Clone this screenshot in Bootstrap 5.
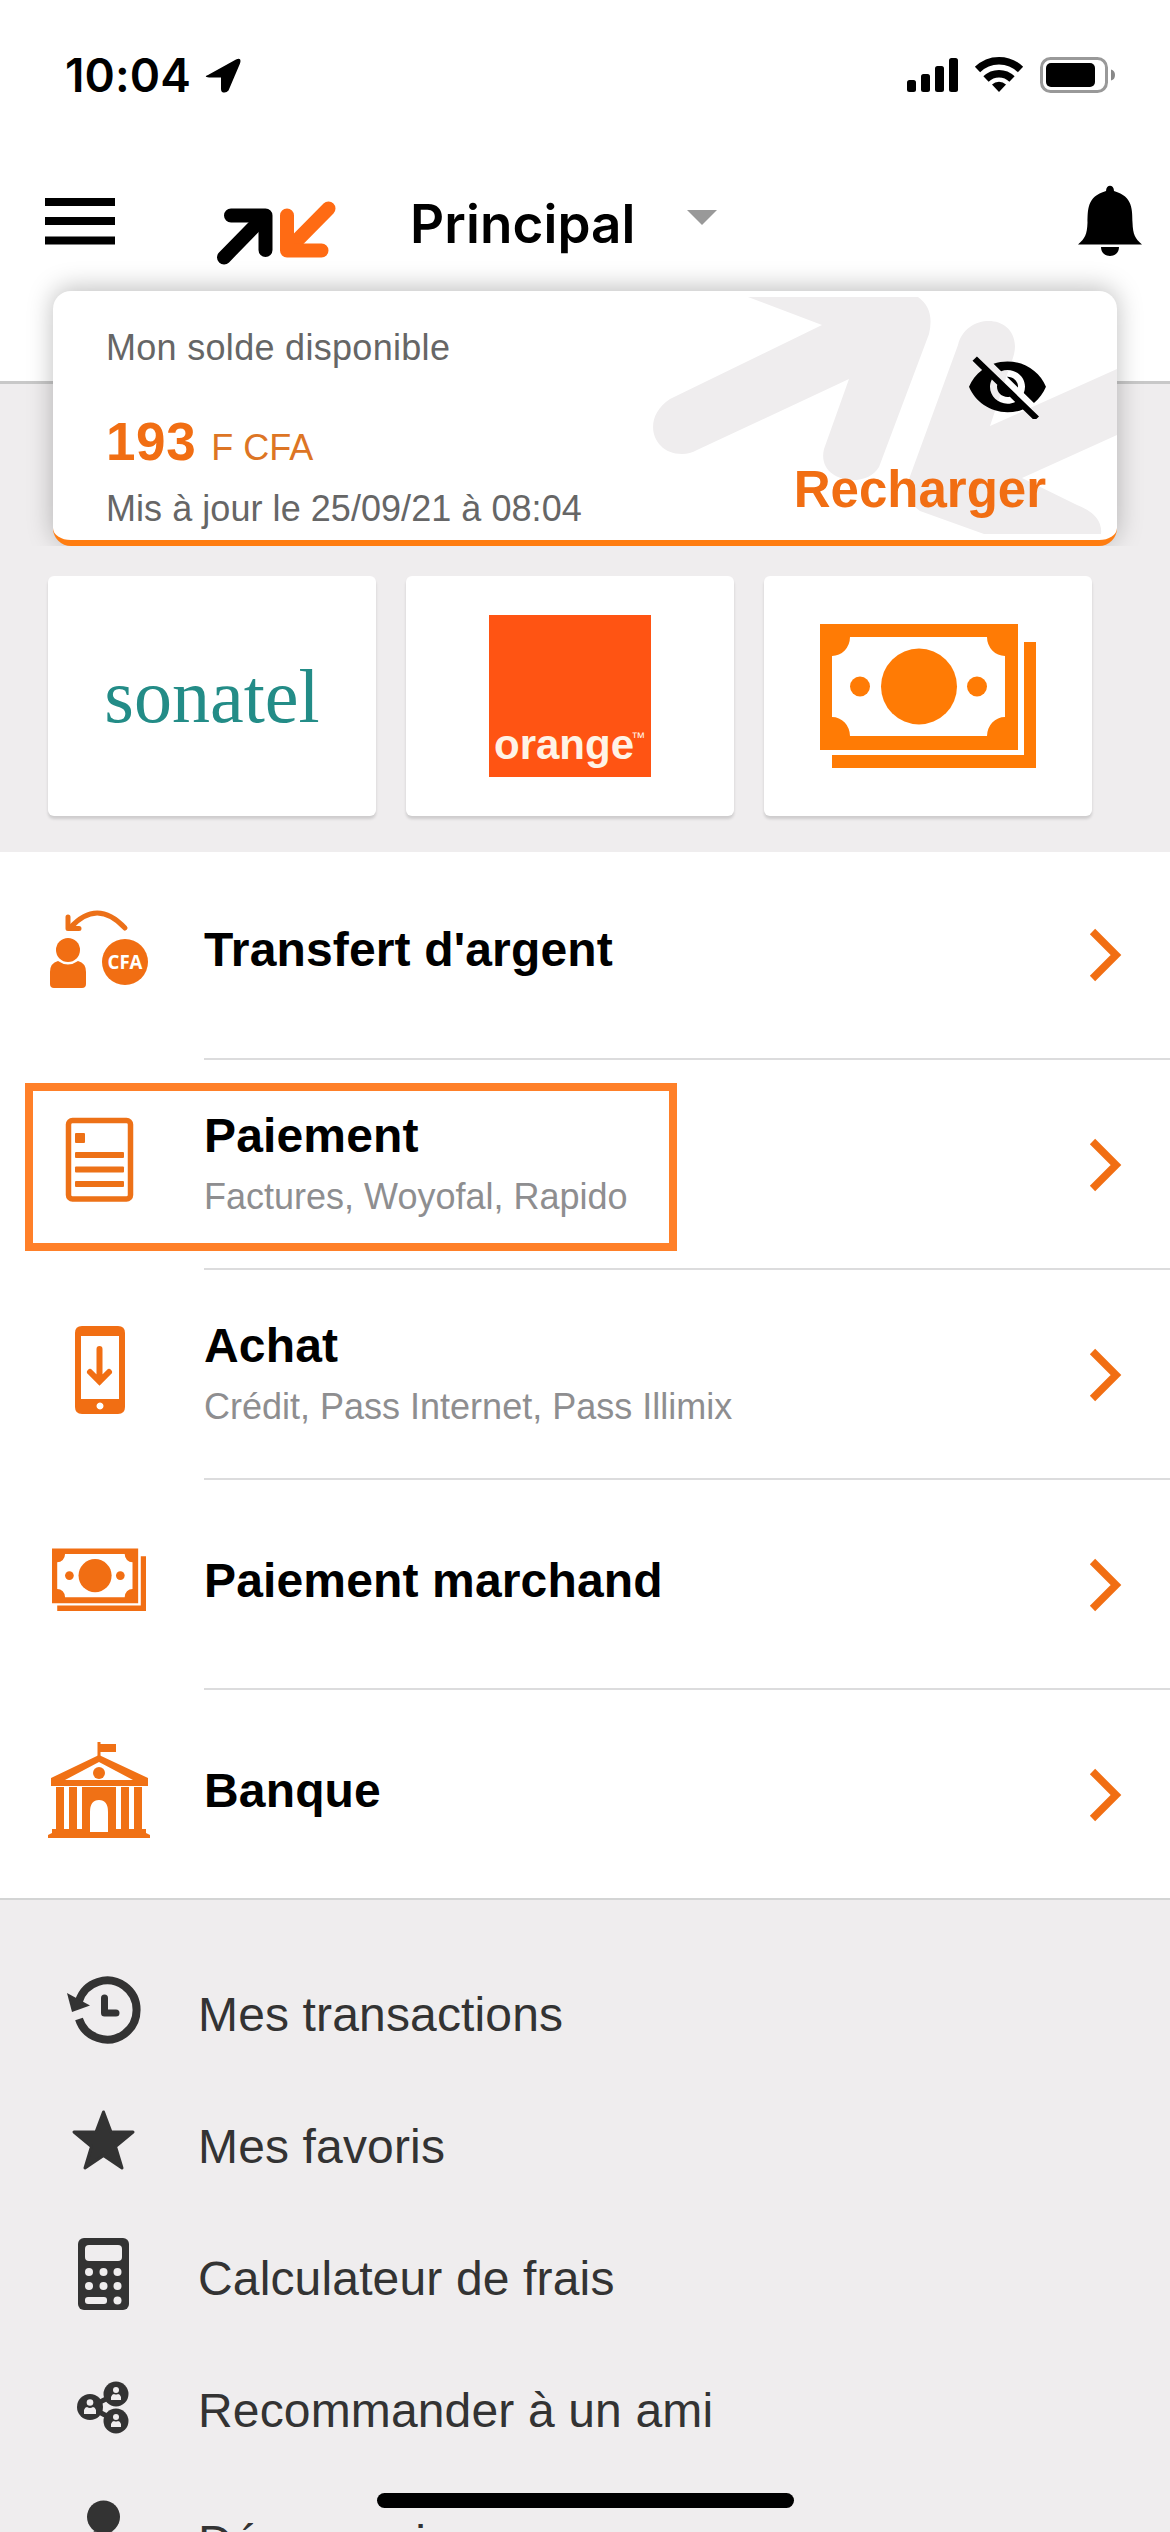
<!DOCTYPE html>
<html lang="fr">
<head>
<meta charset="utf-8">
<meta name="viewport" content="width=device-width, initial-scale=1">
<title>Orange Money</title>
<link href="https://cdn.jsdelivr.net/npm/bootstrap@5.3.0/dist/css/bootstrap.min.css" rel="stylesheet">
<style>
  :root { --om: #f16e13; --ash: #efedee; --ink: #333; }
  body { width: 1170px; height: 2532px; overflow: hidden; background: #fff; color: #000;
         font-family: "Liberation Sans", Arial, sans-serif; }
  svg { display: block; flex: none; }
  .topbar { height: 384px; border-bottom: 3px solid #c8c8c8; }
  .status { height: 150px; padding: 0 53px 0 65px; }
  .clock { font: 600 46px/60px Inter, sans-serif; letter-spacing: .1px; width: 139px; }
  .navline { height: 141px; padding: 0 28px 0 45px; }
  .account { font: 600 53px/64px Inter, sans-serif; letter-spacing: .1px; width: 280px; margin-left: 70px; padding-top: 6px; }
  .upper { background: var(--ash); height: 468px; }
  .balance { height: 255px; flex: none; margin: -93px 53px 30px; border: 0; border-bottom: 6px solid #ff7d11;
             border-radius: 18px; box-shadow: 0 -3px 26px rgba(0,0,0,.26); overflow: hidden; clip-path: inset(-40px -40px 0 -40px); }
  .watermark { position: absolute; left: 0; top: 0; }
  .info { font-size: 36px; line-height: 44px; color: #666; letter-spacing: .3px; }
  .updated { letter-spacing: .05px; margin-top: 9px; white-space: nowrap; }
  .amount { color: var(--om); font-size: 53px; line-height: 60px; margin-top: 42px; }
  .amount b { letter-spacing: .6px; }
  .amount small { font-size: 36px; color: #dd7524; margin-left: 15px; }
  .recharge { font-size: 51px; line-height: 58px; color: var(--om); margin-top: 42px; }
  .tile { width: 328px; height: 240px; border-radius: 6px; box-shadow: 0 3px 3px rgba(0,0,0,.14); }
  .sonatel { font: 76px/80px "Liberation Serif", serif; color: #238c87; }
  .orangebox { width: 162px; height: 162px; background: #ff5413; color: #fff3e6; padding: 0 0 9px 5px; }
  .orangebox b { font-size: 42px; line-height: 46px; }
  .orangebox sup { font-size: 14px; line-height: 14px; top: 0; margin: 0 0 24px -3px; font-weight: 400; }
  .entry { height: 210px; }
  .entry:first-child { height: 208px; }
  .entry:first-child .label { padding-bottom: 10px; }
  .label { border-bottom: 2px solid #dcdcdd; padding-bottom: 6px; }
  .entry:last-child { border-bottom: 2px solid #d3d4d4; }
  .entry:last-child .label { border: 0; }
  .label.double { padding-bottom: 1px; }
  .label h2 { font-size: 48px; line-height: 56px; letter-spacing: .15px; font-weight: 700; margin: 0; }
  .label p { font-size: 36px; line-height: 44px; margin: 11px 0 0; color: #8e8e90; }
  .chevron { align-self: flex-start; margin: 78px 47px 0 0; }
  .entry:first-child .chevron { margin-top: 76px; }
  .outline-box { position: absolute; left: 25px; top: 23px; width: 652px; height: 168px; border: 8px solid #ff8029; }
  .lower { background: var(--ash); height: 632px; padding-top: 49px; overflow: hidden; }
  .extra { height: 132px; color: var(--ink); font-size: 48px; line-height: 56px; letter-spacing: .15px; }
  .homebar { position: absolute; left: 377px; top: 2493px; width: 417px; height: 15px; border-radius: 8px; background: #000; }
</style>
</head>
<body class="position-relative">

<svg width="0" height="0" class="position-absolute">
  <symbol id="note" viewBox="820 624 216 144">
    <path fill-rule="evenodd" d="M820 624h198v126H820zM850 637a18 19 0 0 1-18 19v61a18 19 0 0 1 18 19h137a18 19 0 0 1 18-19v-61a18 19 0 0 1-18-19z"/>
    <circle cx="919" cy="686.500" r="38"/><circle cx="860" cy="686.500" r="10"/><circle cx="977" cy="686.500" r="10"/>
    <path d="M1024 642h12v126H832v-13h192z"/>
  </symbol>
  <symbol id="chev" viewBox="0 0 34 54">
    <path d="M3.500 3.500 27 27 3.500 50.500" fill="none" stroke="#f16e13" stroke-width="7.500"/>
  </symbol>
</svg>

<header class="topbar">
  <div class="status d-flex align-items-center">
    <span class="clock">10:04</span>
    <svg width="38" height="38" viewBox="203 56 38 38"><path d="M207 75 235 59.500Q241 57 239 63.500L227.500 90.500Q225 93.500 221 92Q220 91 220 89V77.500H208Q202 77 207 75z"/></svg>
    <svg class="ms-auto" width="210" height="40" viewBox="907 54 210 40">
      <rect x="907" y="79" width="9" height="12" rx="2.500"/><rect x="921" y="73" width="9" height="18" rx="2.500"/><rect x="935" y="65" width="9" height="26" rx="2.500"/><rect x="949" y="57" width="9" height="34" rx="2.500"/>
      <g fill="none" stroke="#000" stroke-width="7.500"><path d="M977.500 68.500a30.500 30.500 0 0 1 43 0"/><path d="M986 78a18.500 18.500 0 0 1 26 0"/></g>
      <path d="M999 91l-7-7.500a10 10 0 0 1 14 0z"/>
      <rect x="1041.500" y="57.500" width="65" height="33" rx="9" fill="none" stroke="#999" stroke-width="3"/>
      <rect x="1046" y="62" width="49" height="24" rx="5"/><path d="M1111 68.500q4 1 4 5.500t-4 5.500z" fill="#888"/>
    </svg>
  </div>
  <div class="navline d-flex align-items-center">
    <svg width="70" height="70" viewBox="45 185 70 70"><path d="M45 197h70v8H45zM45 216h70v8H45zM45 235.500h70v8H45z"/></svg>
    <svg style="margin-left:101px" width="124" height="92" viewBox="216 174.500 124 92" fill="none" stroke-width="14" stroke-linecap="round" stroke-linejoin="round">
      <g stroke="#000"><path d="M224 257 262 218"/><path d="M231 215H265.500V249.500"/></g>
      <g stroke="#ff6b14"><path d="M328.500 208 290 247"/><path d="M287 215V250H321.500"/></g>
    </svg>
    <span class="account">Principal</span>
    <svg style="margin-left:-3px" width="30" height="21" viewBox="0 0 30 21"><path d="M0 0h30L15 15z" fill="#999"/></svg>
    <svg class="ms-auto" width="64" height="72" viewBox="1078 184 64 72"><path d="M1078 243.500c7-6 9-10 9.500-22 .5-12-1-26 18.500-31.500 0-7 8-7 8 0 19.500 5.500 18 19.500 18.500 31.500.5 12 2.500 16 9.500 22zM1101 246h18c0 12-18 12-18 0z"/></svg>
  </div>
</header>

<section class="upper d-flex flex-column">
  <div class="card balance">
    <svg class="watermark" width="1064" height="249" viewBox="53 291 1064 249" fill="#efedee">
      <path d="M748 297 822 325 670 399C641 418 652 454 682 454Q690 454 697 450L849 379 824 449C816 482 866 490 879 467L929 334Q935 309 918 297z"/>
      <path d="M958 345C966 313 1014 313 1015 346Q1015 354 1011 363L990 426 1117 369V435L1022 478 1077 505Q1103 515 1101 534H984L920 511Q904 500 909 479z"/>
    </svg>
    <div class="d-flex justify-content-between h-100 position-relative" style="padding:35px 71px 0 53px">
      <div>
        <div class="info">Mon solde disponible</div>
        <div class="amount d-flex align-items-baseline"><b>193</b><small>F CFA</small></div>
        <div class="info updated">Mis à jour le 25/09/21 à 08:04</div>
      </div>
      <div class="d-flex flex-column align-items-end" style="padding-top:27px">
        <svg width="77" height="66" viewBox="1 2 22 19.500" preserveAspectRatio="none"><path d="M12 7c2.760 0 5 2.240 5 5 0 .65-.13 1.260-.36 1.830l2.920 2.920c1.510-1.260 2.700-2.890 3.430-4.750-1.730-4.390-6-7.500-11-7.500-1.400 0-2.740.25-3.980.7l2.160 2.160C10.740 7.130 11.350 7 12 7zM2 4.270l2.280 2.280.46.46C3.080 8.300 1.780 10.020 1 12c1.730 4.390 6 7.500 11 7.500 1.550 0 3.030-.3 4.380-.84l.42.42L19.730 22 21 20.730 3.270 3 2 4.270zM7.530 9.800l1.550 1.550c-.05.21-.08.43-.08.65 0 1.660 1.340 3 3 3 .22 0 .44-.03.65-.08l1.550 1.550c-.67.33-1.410.53-2.200.53-2.760 0-5-2.240-5-5 0-.79.2-1.530.53-2.200zm4.310-.78l3.150 3.150.02-.16c0-1.660-1.340-3-3-3l-.17.01z"/></svg>
        <b class="recharge">Recharger</b>
      </div>
    </div>
  </div>
  <div class="d-flex" style="gap:30px;padding-left:48px">
    <div class="tile bg-white d-flex align-items-center justify-content-center"><span class="sonatel">sonatel</span></div>
    <div class="tile bg-white d-flex align-items-center justify-content-center"><div class="orangebox d-flex align-items-end"><b>orange</b><sup>™</sup></div></div>
    <div class="tile bg-white d-flex align-items-center justify-content-center"><svg width="216" height="144" fill="#ff7b05"><use href="#note"/></svg></div>
  </div>
</section>

<main>
  <div class="entry d-flex">
    <svg width="204" height="208" viewBox="0 852 204 208" fill="#f16e13">
      <circle cx="68" cy="950" r="12"/><path d="M50 984V972q0-9 8-11 10 7 20 0 8 2 8 11v12q0 4-4 4H54q-4 0-4-4z"/>
      <circle cx="125" cy="962" r="23"/><text x="125" y="969" text-anchor="middle" font-family="Open Sans, sans-serif" font-weight="700" font-size="19" textLength="35" lengthAdjust="spacingAndGlyphs" fill="#fff">CFA</text>
      <g fill="none" stroke="#ec7018" stroke-width="5" stroke-linecap="round" stroke-linejoin="round"><path d="M125 928Q97 898 70 928"/><path d="M68 917V928.500H79"/></g>
    </svg>
    <div class="label flex-grow-1 d-flex align-items-center"><h2 class="flex-grow-1">Transfert d'argent</h2></div>
  </div>
  <div class="entry d-flex position-relative">
    <svg width="204" height="210" viewBox="0 1060 204 210" fill="#ed7117">
      <rect x="68.500" y="1120.500" width="62" height="78.500" rx="4" fill="none" stroke="#ed7117" stroke-width="5.500"/>
      <rect x="75" y="1133" width="10" height="10" rx="1"/><rect x="75" y="1152" width="49" height="6" rx="1"/><rect x="75" y="1166.500" width="49" height="6" rx="1"/><rect x="75" y="1181" width="49" height="6" rx="1"/>
    </svg>
    <div class="label double flex-grow-1 d-flex align-items-center"><div class="flex-grow-1"><h2>Paiement</h2><p>Factures, Woyofal, Rapido</p></div></div>
    <div class="outline-box"></div>
  </div>
  <div class="entry d-flex">
    <svg width="204" height="210" viewBox="0 1270 204 210" fill="#f16e13">
      <path fill-rule="evenodd" d="M82 1326h36q7 0 7 7v74q0 7-7 7H82q-7 0-7-7v-74q0-7 7-7zM81 1336v63h38v-63zM100 1402.500a3.500 3.500 0 1 0 .01 0z"/>
      <path d="M99.500 1349V1380M90 1372l9.500 9.500 9.500-9.500" fill="none" stroke="#f16e13" stroke-width="6" stroke-linecap="round"/>
    </svg>
    <div class="label double flex-grow-1 d-flex align-items-center"><div class="flex-grow-1"><h2>Achat</h2><p>Crédit, Pass Internet, Pass Illimix</p></div></div>
  </div>
  <div class="entry d-flex">
    <svg width="204" height="210" viewBox="0 1480 204 210" fill="#f16e13"><use href="#note" x="52" y="1548" width="94" height="63.500"/></svg>
    <div class="label flex-grow-1 d-flex align-items-center"><h2 class="flex-grow-1">Paiement marchand</h2></div>
  </div>
  <div class="entry d-flex">
    <svg width="204" height="208" viewBox="0 1690 204 208" fill="#f07115">
      <path d="M97.500 1742v15h3v-5H116v-8h-15.500v-2z"/>
      <path fill-rule="evenodd" d="M99 1755 148 1778v8H51v-8zM99 1762 65 1780h68z"/><circle cx="99" cy="1773" r="6"/>
      <path d="M56 1787h6v43h-6zM69 1787h6v43h-6zM82 1787h34v43h-8v-18q0-12-9-12t-9 12v18h-8zM123 1787h6v43h-6zM136 1787h6v43h-6z"/>
      <path d="M62 1787h2v43h-2zM75 1787h2v43h-2zM121 1787h2v43h-2zM134 1787h2v43h-2zM52 1829h38v3h18v-3h38v4l4 2v3H48v-3l4-2z"/>
    </svg>
    <div class="label flex-grow-1 d-flex align-items-center"><h2 class="flex-grow-1">Banque</h2></div>
  </div>
</main>

<section class="lower">
  <div class="extra d-flex align-items-center">
    <svg width="198" height="132" viewBox="0 1949 198 132" fill="#333">
      <path d="M79 2001A29.500 29.500 0 1 1 79 2019" fill="none" stroke="#333" stroke-width="8"/>
      <path d="M67 1993 90 2005.500 72 2012z"/><path d="M104.500 1998V2013H116" fill="none" stroke="#333" stroke-width="7" stroke-linecap="round" stroke-linejoin="round"/>
    </svg><span>Mes transactions</span>
  </div>
  <div class="extra d-flex align-items-center">
    <svg width="198" height="132" viewBox="0 2081 198 132" fill="#333"><path d="M103.500 2112l7.500 20h22l-17.500 14.500 6.500 21.500-18.500-12.500L85 2168l6.500-21.500L74 2132h22z" stroke="#333" stroke-width="3" stroke-linejoin="round"/></svg><span>Mes favoris</span>
  </div>
  <div class="extra d-flex align-items-center">
    <svg width="198" height="132" viewBox="0 2213 198 132" fill="#efedee">
      <rect x="78" y="2238" width="51" height="72" rx="6" fill="#333"/><rect x="85" y="2245" width="37" height="16" rx="4"/>
      <circle cx="89" cy="2272" r="4"/><circle cx="103.500" cy="2272" r="4"/><circle cx="117.500" cy="2272" r="4"/>
      <circle cx="89" cy="2286" r="4"/><circle cx="103.500" cy="2286" r="4"/><circle cx="117.500" cy="2286" r="4"/>
      <rect x="85" y="2297" width="22" height="7" rx="3"/><circle cx="117.500" cy="2300.500" r="4"/>
    </svg><span>Calculateur de frais</span>
  </div>
  <div class="extra d-flex align-items-center">
    <svg width="198" height="132" viewBox="0 2345 198 132" fill="#333">
      <path d="M116 2394 90 2407 116 2421" fill="none" stroke="#333" stroke-width="5"/>
      <circle cx="90" cy="2407" r="13"/><circle cx="116" cy="2394" r="12.500"/><circle cx="116" cy="2421" r="12.500"/>
      <g fill="#efedee"><circle cx="90" cy="2402.500" r="3.300"/><path d="M84 2414v-4q1-3 3-3 3 2 6 0 2 0 3 3v4z"/><circle cx="116" cy="2390" r="3"/><path d="M111 2400v-3q1-3 3-3 2 1 4 0 2 0 3 3v3z"/><circle cx="116" cy="2417" r="3"/><path d="M111 2427v-3q1-3 3-3 2 1 4 0 2 0 3 3v3z"/></g>
    </svg><span>Recommander à un ami</span>
  </div>
  <div class="extra d-flex align-items-center">
    <svg width="198" height="132" viewBox="0 2477 198 132" fill="#333"><circle cx="103.500" cy="2517" r="16.500"/><path d="M86 2560V2545q0-10 9-14 8 5 16 0 9 4 9 14v15z"/></svg><span>Déconnexion</span>
  </div>
</section>
<div class="homebar"></div>

<script>
  // Every main menu entry ends with the same disclosure chevron.
  document.querySelectorAll('.entry .label').forEach(function (label) {
    label.insertAdjacentHTML('beforeend', '<svg class="chevron" width="34" height="54"><use href="#chev"/></svg>');
  });
</script>
<script src="https://cdn.jsdelivr.net/npm/bootstrap@5.3.0/dist/js/bootstrap.bundle.min.js"></script>
</body>
</html>
